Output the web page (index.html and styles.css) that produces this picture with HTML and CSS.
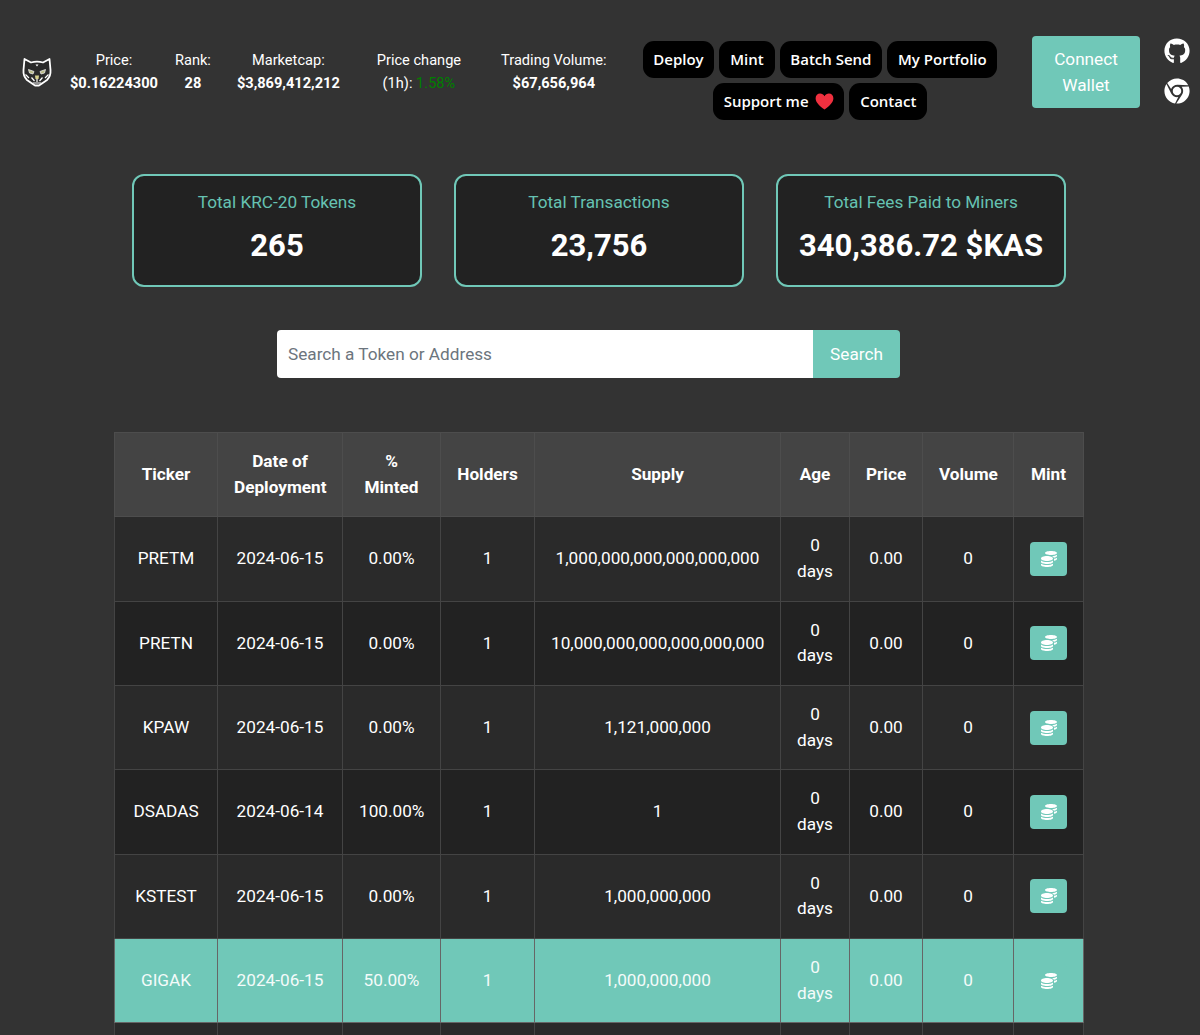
FILE: index.html
```html
<!DOCTYPE html>
<html lang="en">
<head>
<meta charset="utf-8">
<title>KRC-20 Tokens</title>
<link rel="stylesheet" href="styles.css">
</head>
<body>
<svg class="defs" width="0" height="0" aria-hidden="true">
  <symbol id="coins" viewBox="0 0 512 512"><path d="M0 405.3V448c0 35.3 86 64 192 64s192-28.7 192-64v-42.7C342.7 434.4 267.2 448 192 448S41.3 434.4 0 405.3zM320 128c106 0 192-28.7 192-64S426 0 320 0 128 28.7 128 64s86 64 192 64zM0 300.4V352c0 35.3 86 64 192 64s192-28.7 192-64v-51.6c-41.3 34-116.9 51.6-192 51.6S41.3 334.4 0 300.4zm416 11c57.3-11.1 96-31.7 96-55.4v-42.7c-23.2 16.4-57.3 27.6-96 34.5v63.6zM192 160C86 160 0 195.8 0 240s86 80 192 80 192-35.8 192-80-86-80-192-80zm219.3 56.3c60-10.8 100.7-32 100.7-56.3v-42.7c-35.5 25.1-96.5 38.6-160.7 41.8 29.5 14.3 51.2 33.5 60 57.2z"/></symbol>
</svg>
<div class="page">
  <header class="topbar">
    <svg class="logo" viewBox="0 0 30 30" aria-label="logo">
      <path d="M2.500 2 9 5.500Q15 3.800 21 5.500L27.500 2 28.500 13Q29 19 25 23L20 26.500 17 28.500H13L10 26.500 5 23Q1 19 1.500 13Z" fill="#2a2a2a" stroke="#fff" stroke-width="1.800" stroke-linejoin="round"/>
      <path d="M13.500 7.500h3l-1.500 2z" fill="#fff"/>
      <path d="M6.500 12.500 12 14.500 11 17 7.500 16Z" fill="#b9bb86" stroke="#e8e8e8" stroke-width=".8"/>
      <path d="M23.500 12.500 18 14.500 19 17 22.500 16Z" fill="#b9bb86" stroke="#e8e8e8" stroke-width=".8"/>
      <path d="M13 18.500h4l-.5 3.500h-3z" fill="#d6d08c"/>
      <path d="M15 22v3M9.500 20.500l3 3.500M20.500 20.500l-3 3.500M10.500 26h9" stroke="#fff" stroke-width="1.200" fill="none"/>
      <path d="M3.500 17.500 7 21M26.500 17.500 23 21" stroke="#fff" stroke-width="1.200"/>
    </svg>
    <div class="stats">
      <div class="stat stat-price"><span>Price:</span><b>$0.16224300</b></div>
      <div class="stat stat-rank"><span>Rank:</span><b>28</b></div>
      <div class="stat stat-cap"><span>Marketcap:</span><b>$3,869,412,212</b></div>
      <div class="stat stat-change"><span>Price change</span><span>(1h): <i class="up">1.58%</i></span></div>
      <div class="stat stat-volume"><span>Trading Volume:</span><b>$67,656,964</b></div>
    </div>
    <nav class="nav">
      <a class="pill">Deploy</a>
      <a class="pill">Mint</a>
      <a class="pill">Batch Send</a>
      <a class="pill">My Portfolio</a>
      <a class="pill">Support me
        <svg class="heart" viewBox="0 0 24 22"><path d="M12 21.500C4 15.500 .5 11.500 .5 6.800 .5 3.200 3.200 .8 6.300 .8 8.600 .8 10.800 2 12 4.300 13.200 2 15.400 .8 17.700 .8 20.800 .8 23.500 3.200 23.500 6.800 23.500 11.500 20 15.500 12 21.500Z" fill="#f0303f"/></svg>
      </a>
      <a class="pill">Contact</a>
    </nav>
    <button class="connect">Connect Wallet</button>
    <div class="links">
      <svg class="link-icon" viewBox="0 0 496 512"><path d="M165.900 397.400c0 2-2.300 3.600-5.200 3.600-3.300 0-5.600-1.600-5.600-3.600 0-2 2.300-3.600 5.200-3.600 3-.3 5.600 1.300 5.600 3.600zm-31.100-4.500c-.7 2 1.300 4.300 4.300 4.900 2.600 1 5.600 0 6.200-2s-1.300-4.300-4.300-5.200c-2.600-.7-5.500.3-6.200 2.300zm44.200-1.700c-2.900.7-4.900 2.600-4.600 4.900.3 2 2.900 3.300 5.900 2.600 2.900-.7 4.900-2.600 4.600-4.600-.3-1.900-3-3.200-5.900-2.900zM244.800 8C106.100 8 0 113.300 0 252c0 110.900 69.800 205.800 169.500 239.200 12.800 2.300 17.300-5.600 17.300-12.100 0-6.200-.3-40.400-.3-61.400 0 0-70 15-84.700-29.800 0 0-11.400-29.100-27.800-36.600 0 0-22.900-15.700 1.600-15.400 0 0 24.900 2 38.600 25.800 21.900 38.600 58.600 27.500 72.900 20.900 2.300-16 8.800-27.100 16-33.700-55.900-6.200-112.300-14.300-112.300-110.500 0-27.500 7.600-41.300 23.600-58.900-2.600-6.500-11.100-33.300 2.600-67.900 20.900-6.500 69 27 69 27 20-5.600 41.500-8.500 62.800-8.500s42.800 2.900 62.800 8.500c0 0 48.100-33.600 69-27 13.700 34.700 5.200 61.400 2.600 67.900 16 17.700 25.800 31.500 25.800 58.900 0 96.500-58.900 104.200-114.800 110.500 9.200 7.900 17 22.900 17 46.400 0 33.700-.3 75.400-.3 83.600 0 6.500 4.600 14.400 17.300 12.100C428.200 457.800 496 362.900 496 252 496 113.300 383.500 8 244.800 8z"/></svg>
      <svg class="link-icon" viewBox="0 0 496 512"><path d="M131.500 217.500L55.100 100.100c47.600-59.200 119-91.800 192-92.100 42.300-.3 85.500 10.500 124.800 33.200 43.400 25.200 76.400 61.400 97.400 103L264 133.400c-58.100-3.400-113.400 29.300-132.500 84.100zm32.900 38.500c0 46.200 37.400 83.600 83.600 83.600s83.600-37.400 83.600-83.600-37.400-83.600-83.600-83.600-83.600 37.300-83.600 83.600zm314.900-89.200L339.600 174c37.900 44.300 38.500 108.200 6.600 157.200L234.100 503.600c46.500 2.500 94.400-7.700 137.800-32.900 107.400-62 150.900-192 107.400-303.900zM133.700 303.600L40.400 120.100C14.900 159.100 0 205.900 0 256c0 124 90.800 226.700 209.500 244.900l63.700-124.800c-57.600 10.800-113.200-20.800-139.500-72.500z"/></svg>
    </div>
  </header>

  <section class="cards">
    <div class="card"><h2>Total KRC-20 Tokens</h2><p>265</p></div>
    <div class="card"><h2>Total Transactions</h2><p>23,756</p></div>
    <div class="card"><h2>Total Fees Paid to Miners</h2><p>340,386.72 $KAS</p></div>
  </section>

  <form class="search">
    <input class="search-input" type="text" placeholder="Search a Token or Address">
    <button class="search-btn" type="button">Search</button>
  </form>

  <table class="tokens">
    <colgroup>
      <col class="c-ticker"><col class="c-date"><col class="c-minted"><col class="c-holders"><col class="c-supply"><col class="c-age"><col class="c-price"><col class="c-volume"><col class="c-mint">
    </colgroup>
    <thead>
      <tr><th>Ticker</th><th>Date of Deployment</th><th>% Minted</th><th>Holders</th><th>Supply</th><th>Age</th><th>Price</th><th>Volume</th><th>Mint</th></tr>
    </thead>
    <tbody>
      <tr><td>PRETM</td><td>2024-06-15</td><td>0.00%</td><td>1</td><td>1,000,000,000,000,000,000</td><td>0 days</td><td>0.00</td><td>0</td><td><a class="mint"><svg class="coins"><use href="#coins"/></svg></a></td></tr>
      <tr><td>PRETN</td><td>2024-06-15</td><td>0.00%</td><td>1</td><td>10,000,000,000,000,000,000</td><td>0 days</td><td>0.00</td><td>0</td><td><a class="mint"><svg class="coins"><use href="#coins"/></svg></a></td></tr>
      <tr><td>KPAW</td><td>2024-06-15</td><td>0.00%</td><td>1</td><td>1,121,000,000</td><td>0 days</td><td>0.00</td><td>0</td><td><a class="mint"><svg class="coins"><use href="#coins"/></svg></a></td></tr>
      <tr><td>DSADAS</td><td>2024-06-14</td><td>100.00%</td><td>1</td><td>1</td><td>0 days</td><td>0.00</td><td>0</td><td><a class="mint"><svg class="coins"><use href="#coins"/></svg></a></td></tr>
      <tr><td>KSTEST</td><td>2024-06-15</td><td>0.00%</td><td>1</td><td>1,000,000,000</td><td>0 days</td><td>0.00</td><td>0</td><td><a class="mint"><svg class="coins"><use href="#coins"/></svg></a></td></tr>
      <tr class="active"><td>GIGAK</td><td>2024-06-15</td><td>50.00%</td><td>1</td><td>1,000,000,000</td><td>0 days</td><td>0.00</td><td>0</td><td><a class="mint"><svg class="coins"><use href="#coins"/></svg></a></td></tr>
      <tr><td></td><td></td><td></td><td></td><td></td><td></td><td></td><td></td><td></td></tr>
    </tbody>
  </table>
</div>
</body>
</html>
```

FILE: styles.css
```css
* { box-sizing: border-box; }
html, body { margin: 0; padding: 0; background: #333; }
body { font-family: Roboto, "Liberation Sans", sans-serif; color: #fff; font-size: 16px; }
.defs { position: absolute; }
.page { height: 1035px; overflow: hidden; }

.topbar { display: flex; align-items: center; height: 144px; padding: 0 0 0 22px; }
.logo { width: 30px; height: 30px; flex: none; }
.stats { display: flex; margin-left: 18px; width: 537px; font-size: 14.6px; line-height: 23px; text-align: center; }
.stat { display: flex; flex-direction: column; flex: none; }
.stat b { font-weight: 700; }
.stat-rank { margin-left: 17px; }
.stat-cap { margin-left: 26px; }
.stat-change { margin-left: 37px; }
.stat-volume { margin-left: 40px; }
.up { color: #008000; font-style: normal; }

.nav { display: flex; flex-wrap: wrap; justify-content: center; gap: 5px; width: 356px; margin: 16px 0 0 35px; }
.pill { display: inline-flex; align-items: center; height: 37px; padding: 0 10.8px; background: #000; border-radius: 11px; color: #fff; font-family: "Open Sans", "Noto Sans", sans-serif; font-weight: 600; font-size: 15px; white-space: nowrap; }
.heart { width: 19px; height: 17px; margin-left: 6px; }

.connect { width: 108px; height: 72px; margin-left: 34px; padding: 8px 16px 6px; border: 0; border-radius: 4px; background: #70c8b8; color: #fff; font: 400 17.2px/25.6px Roboto, sans-serif; }
.links { display: flex; flex-direction: column; gap: 14px; margin: 0 0 2px 24px; }
.link-icon { display: block; width: 26px; height: 26px; fill: #fff; }

.cards { display: flex; justify-content: center; gap: 32px; padding: 30px 2px 0 0; }
.card { width: 290px; height: 113px; border: 2px solid #70c8b8; border-radius: 12px; background: #222; text-align: center; }
.card h2 { margin: 15px 0 0; font-size: 17.2px; font-weight: 400; line-height: 22px; color: #66c2b2; }
.card p { margin: 13px 0 0; font-size: 31px; font-weight: 700; line-height: 40px; }

.search { display: flex; width: 623px; height: 48px; margin: 43px 0 0 277px; }
.search-input { flex: 1; min-width: 0; padding: 0 11px; border: 0; border-radius: 4px 0 0 4px; background: #fff; font: 400 17.2px Roboto, sans-serif; color: #333; outline: 0; }
.search-input::placeholder { color: #6c757d; opacity: 1; }
.search-btn { width: 87px; border: 0; border-radius: 0 4px 4px 0; background: #70c8b8; color: #fff; font: 400 17.2px Roboto, sans-serif; }

.tokens { width: 969px; margin: 54px 0 0 114px; border-collapse: collapse; table-layout: fixed; line-height: 25.6px; font-size: 17.2px; }
.c-ticker { width: 103px; }
.c-date { width: 125px; }
.c-minted { width: 98px; }
.c-holders { width: 94px; }
.c-supply { width: 246px; }
.c-age { width: 69px; }
.c-price { width: 73px; }
.c-volume { width: 91px; }
.c-mint { width: 70px; }
.tokens th, .tokens td { height: 84.33px; padding: 16px; border: 1px solid #444; text-align: center; vertical-align: middle; }
.tokens th { background: #444; font-weight: 700; border-color: #4d4d4d; }
.tokens tbody tr:nth-child(odd) td { background: #2a2a2a; }
.tokens tbody tr:nth-child(even) td { background: #222; }
.tokens tbody tr.active td { background: #70c8b8; border-color: #666; color: #f4fbfa; }
.mint { display: inline-flex; align-items: center; justify-content: center; width: 37px; height: 34px; border-radius: 4px; background: #70c8b8; vertical-align: middle; }
.coins { width: 16px; height: 16px; fill: #fff; }
```
